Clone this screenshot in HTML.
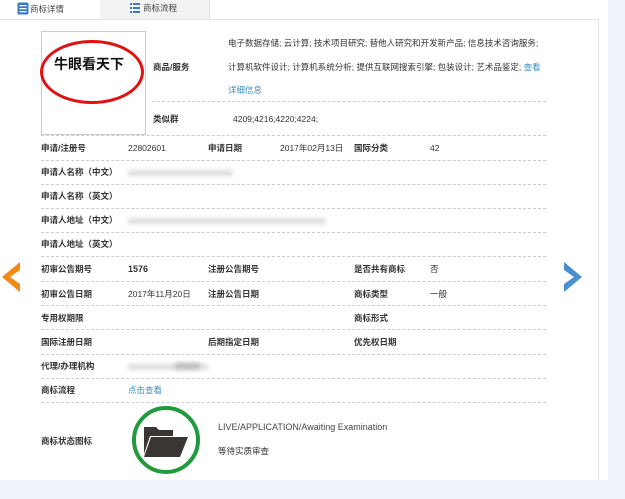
<!DOCTYPE html>
<html><head><meta charset="utf-8"><style>
*{margin:0;padding:0;box-sizing:border-box}
body{width:625px;height:499px;background:#eef2f9;position:relative;overflow:hidden;font-family:"Liberation Sans","Noto Sans CJK SC",sans-serif;font-size:8.5px;color:#333}
.panel{position:absolute;left:0;top:0;width:608px;height:480px;background:#fff}
.inner{position:absolute;left:0;top:19px;width:599px;height:461px;border-top:1px solid #e3e3e3;border-right:1px solid #e3e3e3}
.t{position:absolute;white-space:nowrap;line-height:10px}
.b{font-weight:bold;color:#333}
.dl{position:absolute;border-top:1px dashed #ccc;height:0}
.blur{position:absolute;background:#ddd;filter:blur(2px);height:6px}
.tab2{position:absolute;left:100px;top:0;width:110px;height:19px;background:#f3f3f3;border-right:1px solid #e3e3e3}
a{color:#3a8fc0}
</style></head><body>
<div class="panel"></div>
<div class="inner"></div>
<div class="tab2"></div>
<svg style="position:absolute;left:17px;top:2px" width="12" height="13"><rect x="0.5" y="0.5" width="11" height="12" rx="1.5" fill="#3b78c3"/><rect x="2.5" y="3" width="7" height="1.3" fill="#fff"/><rect x="2.5" y="6" width="7" height="1.3" fill="#fff"/><rect x="2.5" y="9" width="7" height="1.3" fill="#fff"/></svg>
<div class="t" style="left:30px;top:4px;color:#444">商标详情</div>
<svg style="position:absolute;left:130px;top:3px" width="10" height="10"><g fill="#3b78c3"><rect x="0" y="0" width="2" height="2"/><rect x="3" y="0" width="7" height="2"/><rect x="0" y="4" width="2" height="2"/><rect x="3" y="4" width="7" height="2"/><rect x="0" y="8" width="2" height="2"/><rect x="3" y="8" width="7" height="2"/></g></svg>
<div class="t" style="left:143px;top:3px;color:#444">商标流程</div>

<div style="position:absolute;left:41px;top:31px;width:105px;height:104px;border:1px solid #ccc"></div>
<div style="position:absolute;left:40px;top:40px;width:104px;height:64px;border:3px solid #e31010;border-radius:50%"></div>
<div class="t" style="left:54px;top:56px;font-size:14px;line-height:16px;font-weight:bold;color:#111">牛眼看天下</div>
<div class="t b" style="left:153px;top:62px">商品/服务</div>
<div class="t" style="left:228px;top:38px">电子数据存储; 云计算; 技术项目研究; 替他人研究和开发新产品; 信息技术咨询服务;</div>
<div class="t" style="left:228px;top:62px">计算机软件设计; 计算机系统分析; 提供互联网搜索引擎; 包装设计; 艺术品鉴定; <a>查看</a></div>
<div class="t" style="left:228px;top:85px"><a>详细信息</a></div>
<div class="dl" style="left:152px;top:101px;width:394px"></div>
<div class="t b" style="left:153px;top:114px">类似群</div>
<div class="t" style="left:233px;top:114px">4209;4216;4220;4224;</div>
<div class="dl" style="left:41px;top:135px;width:505px"></div>

<div class="t b" style="left:41px;top:143px">申请/注册号</div><div class="t" style="left:128px;top:143px">22802601</div>
<div class="t b" style="left:208px;top:143px">申请日期</div><div class="t" style="left:280px;top:143px">2017年02月13日</div>
<div class="t b" style="left:354px;top:143px">国际分类</div><div class="t" style="left:430px;top:143px">42</div>
<div class="dl" style="left:41px;top:160px;width:505px"></div>
<div class="t b" style="left:41px;top:167px">申请人名称（中文）</div><div class="blur" style="left:128px;top:170px;width:105px"></div>
<div class="dl" style="left:41px;top:184px;width:505px"></div>
<div class="t b" style="left:41px;top:191px">申请人名称（英文）</div>
<div class="dl" style="left:41px;top:208px;width:505px"></div>
<div class="t b" style="left:41px;top:215px">申请人地址（中文）</div><div class="blur" style="left:128px;top:218px;width:198px"></div>
<div class="dl" style="left:41px;top:232px;width:505px"></div>
<div class="t b" style="left:41px;top:239px">申请人地址（英文）</div>
<div class="dl" style="left:41px;top:256px;width:505px"></div>

<div class="t b" style="left:41px;top:264px">初审公告期号</div><div class="t b" style="left:128px;top:264px;font-size:9px">1576</div>
<div class="t b" style="left:208px;top:264px">注册公告期号</div>
<div class="t b" style="left:354px;top:264px">是否共有商标</div><div class="t" style="left:430px;top:264px">否</div>
<div class="dl" style="left:41px;top:281px;width:505px"></div>
<div class="t b" style="left:41px;top:289px">初审公告日期</div><div class="t" style="left:128px;top:289px">2017年11月20日</div>
<div class="t b" style="left:208px;top:289px">注册公告日期</div>
<div class="t b" style="left:354px;top:289px">商标类型</div><div class="t" style="left:430px;top:289px">一般</div>
<div class="dl" style="left:41px;top:305px;width:505px"></div>
<div class="t b" style="left:41px;top:313px">专用权期限</div>
<div class="t b" style="left:354px;top:313px">商标形式</div>
<div class="dl" style="left:41px;top:329px;width:505px"></div>
<div class="t b" style="left:41px;top:337px">国际注册日期</div>
<div class="t b" style="left:208px;top:337px">后期指定日期</div>
<div class="t b" style="left:354px;top:337px">优先权日期</div>
<div class="dl" style="left:41px;top:354px;width:505px"></div>
<div class="t b" style="left:41px;top:361px">代理/办理机构</div><div class="blur" style="left:128px;top:364px;width:80px"></div><div class="blur" style="left:175px;top:363px;width:25px;background:#bbb"></div>
<div class="dl" style="left:41px;top:378px;width:505px"></div>
<div class="t b" style="left:41px;top:385px">商标流程</div><div class="t" style="left:128px;top:385px"><a>点击查看</a></div>
<div class="dl" style="left:41px;top:402px;width:505px"></div>

<div class="t b" style="left:41px;top:436px">商标状态图标</div>
<div style="position:absolute;left:132px;top:406px;width:68px;height:68px;border:4px solid #1f9a3c;border-radius:50%"></div>
<svg style="position:absolute;left:142px;top:424px" width="48" height="34" viewBox="0 0 48 34"><path d="M2 3h12l3 3h14v6H8L2 30z" fill="#3a3634"/><path d="M9 13h37L38 33H2z" fill="#3a3634"/></svg>
<div class="t" style="left:218px;top:422px;font-size:9px;color:#444">LIVE/APPLICATION/Awaiting Examination</div>
<div class="t" style="left:218px;top:446px">等待实质审查</div>

<svg style="position:absolute;left:2px;top:262px" width="18" height="30"><path d="M18 0L0 15l18 15V22L8 15l10-7z" fill="#f08a12"/></svg>
<svg style="position:absolute;left:564px;top:262px" width="18" height="30"><path d="M0 0l18 15L0 30V22l10-7L0 8z" fill="#4a8fd0"/></svg>
</body></html>
